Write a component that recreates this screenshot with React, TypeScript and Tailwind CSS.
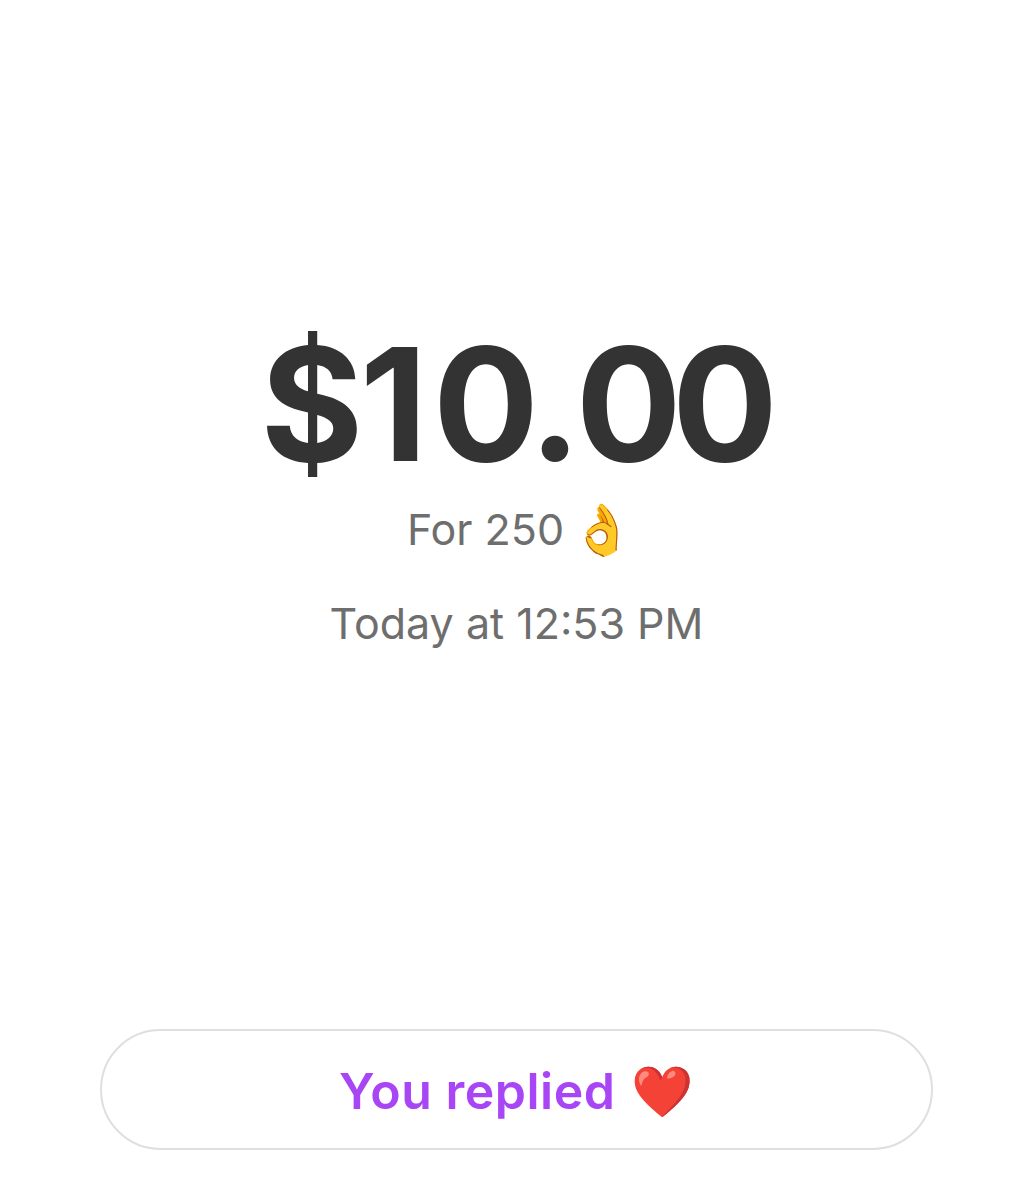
export default function App() {
  return (
    <div className="flex h-[1200px] flex-col items-center bg-white font-['Inter',sans-serif]">
      <div className="mt-[324px] text-[157px] font-bold leading-[160px] tracking-[-5.5px] text-[#333333]">
        <span className="tracking-[-3.5px]">$</span>
        <span className="tracking-[5.5px]">1</span>
        0.
        <span className="tracking-[-9.5px]">0</span>
        0
      </div>
      <div className="mt-[19px] flex h-[52px] items-center pl-[7px] text-[43px] leading-[52px] text-[#6e6e6e]">
        For 250
        <span className="ml-[7px] text-[50px] leading-[52px]">👌</span>
      </div>
      <div className="mt-[42px] text-[43px] leading-[52px] text-[#6e6e6e]">Today at 12:53 PM</div>
      <div className="mt-auto mb-[50px] flex h-[121px] w-[833px] items-center justify-center gap-[16px] rounded-full border-2 border-[#dfdfe2] pt-[4px] text-[50px] font-semibold tracking-[0.5px] text-[#a845f5]">
        You replied
        <span>❤️</span>
      </div>
    </div>
  );
}
